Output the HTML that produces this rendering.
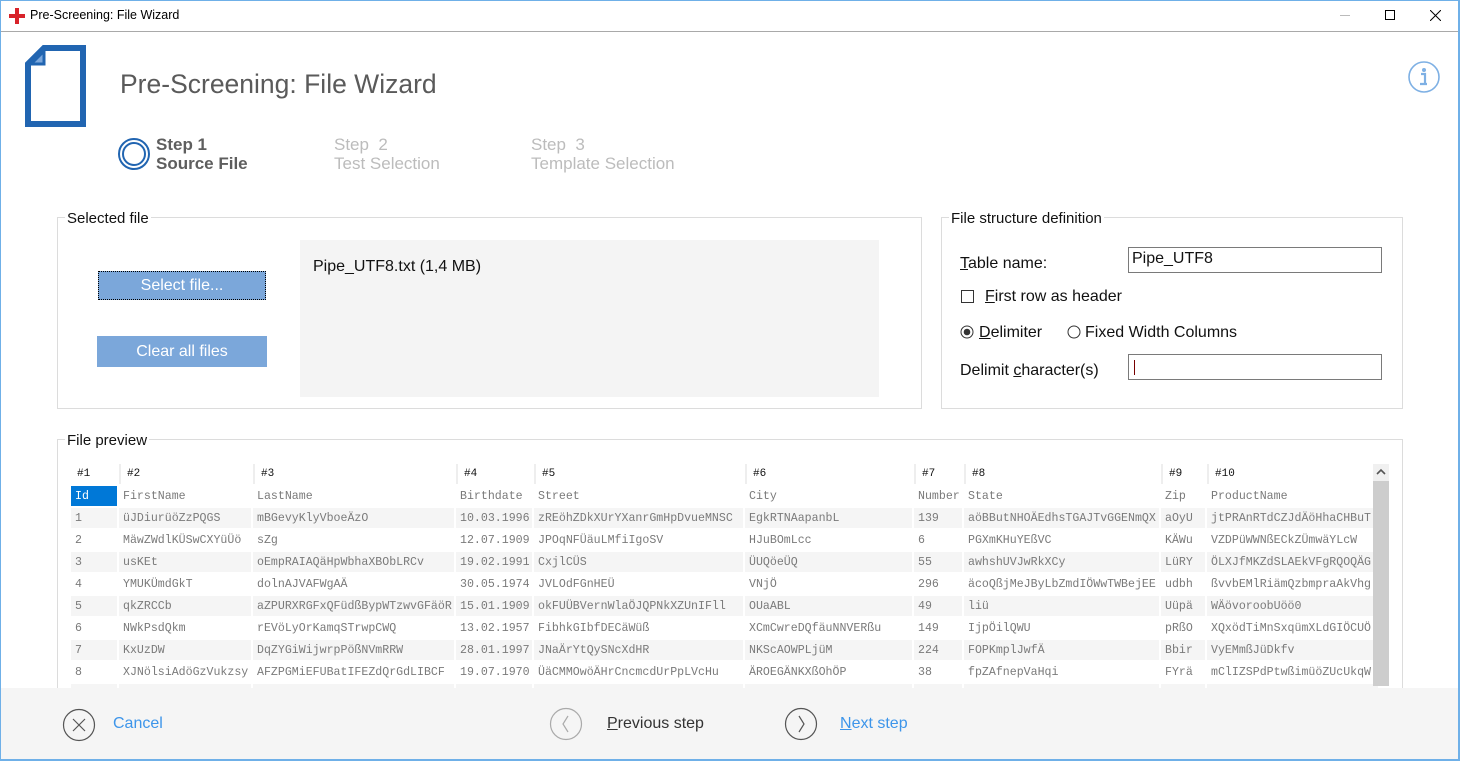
<!DOCTYPE html>
<html><head><meta charset="utf-8"><style>
*{margin:0;padding:0;box-sizing:border-box}
body{width:1460px;height:761px;position:relative;overflow:hidden;background:#fff;font-family:"Liberation Sans",sans-serif;}
.a{position:absolute}
.fs{position:absolute;border:1px solid #dcdcdc}
.lg{position:absolute;background:#fff;padding:0 2px;font-size:15px;color:#111;top:-8px;left:7px}
.t{font-size:15px;color:#222}
table{position:absolute;left:69px;top:462px;border-collapse:separate;border-spacing:2px;table-layout:fixed;font-family:"Liberation Mono",monospace;font-size:11.6px;color:#7a7a7a}
td{height:20px;padding:0 0 0 4px;white-space:nowrap;overflow:hidden;vertical-align:middle}
tr.h td{color:#111;border-left:2px solid #eee;padding-left:6px;font-size:11px}
tr.h td:first-child{border-left:none}
tr.g td{background:#f5f5f5}
u{text-decoration:underline}
</style></head><body>
<div class="a" style="left:0;top:0;width:1460px;height:1px;background:#6fb0e8"></div>
<div class="a" style="left:0;top:0;width:1px;height:761px;background:#6fb0e8"></div>
<div class="a" style="left:1458px;top:0;width:2px;height:761px;background:#6fb0e8"></div>
<div class="a" style="left:0;top:759px;width:1460px;height:2px;background:#6fb0e8"></div>
<div class="a" style="left:1px;top:31px;width:1457px;height:1px;background:#a9a9a9"></div>
<div class="a" style="left:9px;top:14px;width:16px;height:4px;background:#d8232a"></div>
<div class="a" style="left:15px;top:8px;width:4px;height:16px;background:#d8232a"></div>
<div class="a" style="left:30px;top:8px;font-size:12.5px;color:#000">Pre-Screening: File Wizard</div>
<div class="a" style="left:1340px;top:15px;width:10px;height:1px;background:#bbb"></div>
<div class="a" style="left:1385px;top:10px;width:10px;height:10px;border:1px solid #000"></div>
<svg class="a" style="left:1430px;top:10px" width="11" height="11"><path d="M0 0L11 11M11 0L0 11" stroke="#000" stroke-width="1"/></svg>
<svg class="a" style="left:25px;top:45px" width="62" height="82"><path d="M3 19V79H58V3H19Z" fill="#fff" stroke="#2165b1" stroke-width="6"/><path d="M6 19L19 6V19Z" fill="#7ba7dc" stroke="#2165b1" stroke-width="3"/></svg>
<div class="a" style="left:120px;top:69px;font-size:26.5px;color:#5a5a5a">Pre-Screening: File Wizard</div>
<svg class="a" style="left:1407px;top:60px" width="34" height="34"><circle cx="17" cy="17" r="15" fill="none" stroke="#7eb0e4" stroke-width="1.6"/><circle cx="17" cy="10" r="2" fill="#7eb0e4"/><path d="M14 14H18V24H20M13 24H20" stroke="#7eb0e4" stroke-width="2.2" fill="none"/></svg>
<svg class="a" style="left:117px;top:137px" width="34" height="34"><circle cx="17" cy="17" r="15" fill="none" stroke="#2165b1" stroke-width="2"/><circle cx="17" cy="17" r="11" fill="none" stroke="#2165b1" stroke-width="2"/></svg>
<div class="a" style="left:156px;top:135px;font-size:17px;font-weight:bold;color:#5e5e5e;line-height:19px">Step 1<br>Source File</div>
<div class="a" style="left:334px;top:135px;font-size:17px;color:#bcbcbc;line-height:19px">Step&nbsp; 2<br>Test Selection</div>
<div class="a" style="left:531px;top:135px;font-size:17px;color:#bcbcbc;line-height:19px">Step&nbsp; 3<br>Template Selection</div>
<div class="fs" style="left:57px;top:217px;width:865px;height:192px"><div class="lg">Selected file</div></div>
<div class="a" style="left:98px;top:271px;width:168px;height:29px;background:#7ba7da;border:1px dotted #000;color:#fff;font-size:16px;text-align:center;line-height:27px">Select file...</div>
<div class="a" style="left:97px;top:336px;width:170px;height:31px;background:#7ba7da;color:#fff;font-size:16px;text-align:center;line-height:31px">Clear all files</div>
<div class="a" style="left:300px;top:240px;width:579px;height:157px;background:#f4f4f4"></div>
<div class="a t" style="left:313px;top:258px;font-size:16px;color:#111">Pipe_UTF8.txt (1,4 MB)</div>
<div class="fs" style="left:941px;top:217px;width:462px;height:192px"><div class="lg">File structure definition</div></div>
<div class="a t" style="left:960px;top:255px;font-size:16px;color:#111"><u>T</u>able name:</div>
<div class="a" style="left:1128px;top:247px;width:254px;height:26px;border:1px solid #7a7a7a;font-size:16px;padding:2px 3px;color:#111">Pipe_UTF8</div>
<div class="a" style="left:961px;top:290px;width:13px;height:13px;border:1px solid #333"></div>
<div class="a" style="left:985px;top:288px;font-size:16px;color:#111"><u>F</u>irst row as header</div>
<svg class="a" style="left:960px;top:325px" width="14" height="14"><circle cx="7" cy="7" r="6" fill="#fff" stroke="#333"/><circle cx="7" cy="7" r="3.3" fill="#333"/></svg>
<div class="a" style="left:979px;top:324px;font-size:16px;color:#111"><u>D</u>elimiter</div>
<svg class="a" style="left:1067px;top:325px" width="14" height="14"><circle cx="7" cy="7" r="6" fill="#fff" stroke="#333"/></svg>
<div class="a" style="left:1085px;top:324px;font-size:16px;color:#111">Fixed Width Columns</div>
<div class="a" style="left:960px;top:362px;font-size:16px;color:#111">Delimit <u>c</u>haracter(s)</div>
<div class="a" style="left:1128px;top:354px;width:254px;height:26px;border:1px solid #7a7a7a"></div>
<div class="a" style="left:1134px;top:360px;width:1px;height:15px;background:#700"></div>
<div class="fs" style="left:57px;top:439px;width:1346px;height:260px;border-bottom:none"><div class="lg">File preview</div></div>
<table>
<colgroup><col style="width:46px"><col style="width:132px"><col style="width:201px"><col style="width:76px"><col style="width:209px"><col style="width:167px"><col style="width:48px"><col style="width:195px"><col style="width:44px"><col style="width:165px"></colgroup>
<tr class="h"><td>#1</td><td>#2</td><td>#3</td><td>#4</td><td>#5</td><td>#6</td><td>#7</td><td>#8</td><td>#9</td><td>#10</td></tr>
<tr><td style="background:#0078d7;color:#fff">Id</td><td>FirstName</td><td>LastName</td><td>Birthdate</td><td>Street</td><td>City</td><td>Number</td><td>State</td><td>Zip</td><td>ProductName</td></tr>
<tr class="g"><td>1</td><td>üJDiurüöZzPQGS</td><td>mBGevyKlyVboeÄzO</td><td>10.03.1996</td><td>zREöhZDkXUrYXanrGmHpDvueMNSC</td><td>EgkRTNAapanbL</td><td>139</td><td>aöBButNHOÄEdhsTGAJTvGGENmQX</td><td>aOyU</td><td>jtPRAnRTdCZJdÄöHhaCHBuT.</td></tr>
<tr><td>2</td><td>MäwZWdlKÜSwCXYüÜö</td><td>sZg</td><td>12.07.1909</td><td>JPOqNFÜäuLMfiIgoSV</td><td>HJuBOmLcc</td><td>6</td><td>PGXmKHuYEßVC</td><td>KÄWu</td><td>VZDPüWWNßECkZÜmwäYLcW</td></tr>
<tr class="g"><td>3</td><td>usKEt</td><td>oEmpRAIAQäHpWbhaXBObLRCv</td><td>19.02.1991</td><td>CxjlCÜS</td><td>ÜUQöeÜQ</td><td>55</td><td>awhshUVJwRkXCy</td><td>LüRY</td><td>ÖLXJfMKZdSLAEkVFgRQOQÄG.</td></tr>
<tr><td>4</td><td>YMUKÜmdGkT</td><td>dolnAJVAFWgAÄ</td><td>30.05.1974</td><td>JVLOdFGnHEÜ</td><td>VNjÖ</td><td>296</td><td>äcoQßjMeJByLbZmdIÖWwTWBejEE</td><td>udbh</td><td>ßvvbEMlRiämQzbmpraAkVhg.</td></tr>
<tr class="g"><td>5</td><td>qkZRCCb</td><td>aZPURXRGFxQFüdßBypWTzwvGFäöR</td><td>15.01.1909</td><td>okFUÜBVernWlaÖJQPNkXZUnIFll</td><td>OUaABL</td><td>49</td><td>liü</td><td>Uüpä</td><td>WÄövoroobUöö0</td></tr>
<tr><td>6</td><td>NWkPsdQkm</td><td>rEVöLyOrKamqSTrwpCWQ</td><td>13.02.1957</td><td>FibhkGIbfDECäWüß</td><td>XCmCwreDQfäuNNVERßu</td><td>149</td><td>IjpÖilQWU</td><td>pRßO</td><td>XQxödTiMnSxqümXLdGIÖCUÖ</td></tr>
<tr class="g"><td>7</td><td>KxUzDW</td><td>DqZYGiWijwrpPößNVmRRW</td><td>28.01.1997</td><td>JNaÄrYtQySNcXdHR</td><td>NKScAOWPLjüM</td><td>224</td><td>FOPKmplJwfÄ</td><td>Bbir</td><td>VyEMmßJüDkfv</td></tr>
<tr><td>8</td><td>XJNölsiAdöGzVukzsy</td><td>AFZPGMiEFUBatIFEZdQrGdLIBCF</td><td>19.07.1970</td><td>ÜäCMMOwöÄHrCncmcdUrPpLVcHu</td><td>ÄROEGÄNKXßOhÖP</td><td>38</td><td>fpZAfnepVaHqi</td><td>FYrä</td><td>mClIZSPdPtwßimüöZUcUkqW.</td></tr>
<tr class="g"><td></td><td></td><td></td><td></td><td></td><td></td><td></td><td></td><td></td><td></td></tr>
</table>
<div class="a" style="left:1373px;top:464px;width:16px;height:17px;background:#f0f0f0"></div>
<svg class="a" style="left:1376px;top:468px" width="10" height="8"><path d="M1 6L5 2L9 6" stroke="#555" stroke-width="1.6" fill="none"/></svg>
<div class="a" style="left:1373px;top:481px;width:16px;height:205px;background:#cdcdcd"></div>
<div class="a" style="left:1px;top:688px;width:1457px;height:71px;background:#f5f5f5"></div>
<svg class="a" style="left:62px;top:708px" width="34" height="34"><circle cx="17" cy="17" r="15.5" fill="none" stroke="#555" stroke-width="1.2"/><path d="M11 11L23 23M23 11L11 23" stroke="#555" stroke-width="1.2"/></svg>
<div class="a" style="left:113px;top:715px;font-size:16px;color:#3d95ea">Cancel</div>
<svg class="a" style="left:549px;top:707px" width="34" height="34"><circle cx="17" cy="17" r="15.5" fill="none" stroke="#aaa" stroke-width="1.2"/><path d="M19 9L14 17L19 25" stroke="#aaa" stroke-width="1.2" fill="none"/></svg>
<div class="a" style="left:607px;top:715px;font-size:16px;color:#333"><u>P</u>revious step</div>
<svg class="a" style="left:784px;top:707px" width="34" height="34"><circle cx="17" cy="17" r="15.5" fill="none" stroke="#555" stroke-width="1.2"/><path d="M15 9L20 17L15 25" stroke="#555" stroke-width="1.2" fill="none"/></svg>
<div class="a" style="left:840px;top:715px;font-size:16px;color:#3d95ea"><u>N</u>ext step</div>
</body></html>
